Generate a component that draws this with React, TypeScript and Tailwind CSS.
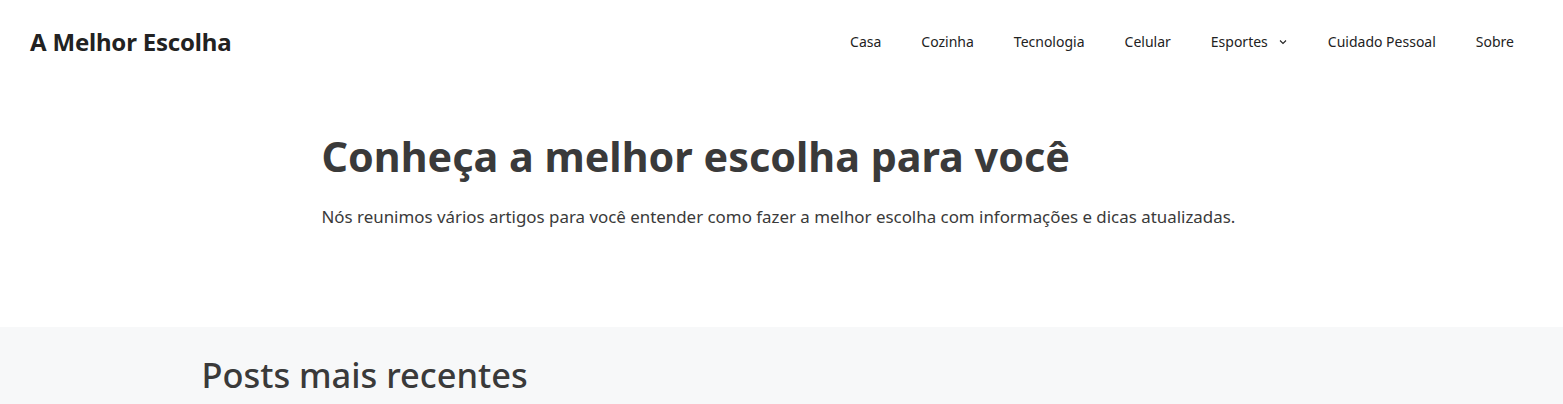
import React from 'react';

const navItems = ['Casa', 'Cozinha', 'Tecnologia', 'Celular', 'Esportes', 'Cuidado Pessoal', 'Sobre'];

const Chevron: React.FC = () => (
  <svg className="ml-[10px] h-[10px] w-[10px]" viewBox="0 0 10 10" fill="none" stroke="currentColor" strokeWidth="1.1">
    <path d="M2 3.5 L5 6.5 L8 3.5" />
  </svg>
);

export default function App() {
  return (
    <div className="flex min-h-[404px] flex-col bg-white font-['Noto_Sans',sans-serif] text-[#3a3a3a]">
      {/* Header */}
      <header className="flex h-[83px] items-center justify-between pl-[30px] pr-[49px]">
        <div className="text-[24px] font-bold tracking-[-0.2px] text-[#222]">A Melhor Escolha</div>
        <nav>
          <ul className="flex items-center text-[14px] text-[#222]">
            {navItems.map((item, i) => (
              <li
                key={item}
                className={
                  'flex items-center ' +
                  (i === navItems.length - 1 ? 'pl-5' : 'px-5')
                }
              >
                {item}
                {item === 'Esportes' && <Chevron />}
              </li>
            ))}
          </ul>
        </nav>
      </header>

      {/* Hero */}
      <section className="mx-auto w-[920px] pt-[49px] pb-[98px]">
        <h1 className="text-[41.3px] font-bold leading-[1.2] text-[#3a3a3a]">Conheça a melhor escolha para você</h1>
        <p className="mt-[22px] text-[16.9px] leading-[1.5] text-[#3a3a3a]">
          Nós reunimos vários artigos para você entender como fazer a melhor escolha com informações e dicas atualizadas.
        </p>
      </section>

      {/* Posts */}
      <section className="flex-1 bg-[#f7f8f9]">
        <div className="mx-auto w-[1160px] pt-[22px]">
          <h2 className="text-[34.4px] font-medium text-[#3a3a3a]">Posts mais recentes</h2>
        </div>
      </section>
    </div>
  );
}
